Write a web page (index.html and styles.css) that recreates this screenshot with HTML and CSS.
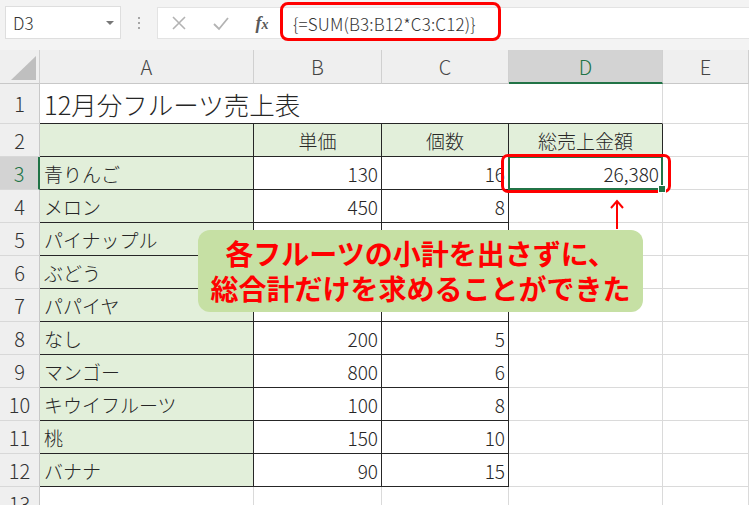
FILE: index.html
```html
<!DOCTYPE html>
<html lang="ja">
<head>
<meta charset="utf-8">
<title>Excel SUM array</title>
<link rel="stylesheet" href="styles.css">
</head>
<body>
<div class="app">
  <div class="toolbar">
    <div class="namebox"><span class="nb-text">D3</span><span class="dd"></span></div>
    <div class="sep"><span></span><span></span><span></span></div>
    <div class="fbar">
      <span class="ic"><svg width="16" height="16" viewBox="0 0 16 16"><path d="M2 2 L14 14 M14 2 L2 14" stroke="#b3b3b3" stroke-width="1.6" fill="none"/></svg></span>
      <span class="ic"><svg width="18" height="16" viewBox="0 0 18 16"><path d="M2 9 L7 14 L16 3" stroke="#b3b3b3" stroke-width="1.8" fill="none"/></svg></span>
      <span class="ic fx"><i>f</i><i class="fx-x">x</i></span>
      <span class="formula">{=SUM(B3:B12*C3:C12)}</span>
    </div>
  </div>

  <div class="sheet">
    <div class="c corner"><span class="tri"></span></div>
    <div class="c ch">A</div><div class="c ch">B</div><div class="c ch">C</div><div class="c ch sel">D</div><div class="c ch">E</div>

    <div class="c rh">1</div><div class="c title">12月分フルーツ売上表</div><div class="c"></div>

    <div class="c rh">2</div><div class="c t g"></div><div class="c t g ctr">単価</div><div class="c t g ctr">個数</div><div class="c t g ctr">総売上金額</div><div class="c"></div>

    <div class="c rh sel">3</div><div class="c t g">青りんご</div><div class="c t n">130</div><div class="c t n">16</div><div class="c t n d3">26,380</div><div class="c"></div>

    <div class="c rh">4</div><div class="c t g">メロン</div><div class="c t n">450</div><div class="c t n">8</div><div class="c"></div><div class="c"></div>

    <div class="c rh">5</div><div class="c t g">パイナップル</div><div class="c t n"></div><div class="c t n"></div><div class="c"></div><div class="c"></div>

    <div class="c rh">6</div><div class="c t g">ぶどう</div><div class="c t n"></div><div class="c t n"></div><div class="c"></div><div class="c"></div>

    <div class="c rh">7</div><div class="c t g">パパイヤ</div><div class="c t n"></div><div class="c t n"></div><div class="c"></div><div class="c"></div>

    <div class="c rh">8</div><div class="c t g">なし</div><div class="c t n">200</div><div class="c t n">5</div><div class="c"></div><div class="c"></div>

    <div class="c rh">9</div><div class="c t g">マンゴー</div><div class="c t n">800</div><div class="c t n">6</div><div class="c"></div><div class="c"></div>

    <div class="c rh">10</div><div class="c t g">キウイフルーツ</div><div class="c t n">100</div><div class="c t n">8</div><div class="c"></div><div class="c"></div>

    <div class="c rh">11</div><div class="c t g">桃</div><div class="c t n">150</div><div class="c t n">10</div><div class="c"></div><div class="c"></div>

    <div class="c rh">12</div><div class="c t g">バナナ</div><div class="c t n">90</div><div class="c t n">15</div><div class="c"></div><div class="c"></div>

    <div class="c rh">13</div><div class="c"></div><div class="c"></div><div class="c"></div><div class="c"></div><div class="c"></div>
  </div>

  <div class="hl-formula"></div>
  <div class="hl-cell"></div>
  <svg class="arrow" width="16" height="32" viewBox="0 0 16 32"><path d="M8 2 L8 30 M2 9 L8 2 L14 9" stroke="#ff0000" stroke-width="2" fill="none"/></svg>
  <div class="callout">
    <p>各フルーツの小計を出さずに、</p>
    <p>総合計だけを求めることができた</p>
  </div>
</div>
</body>
</html>
```

FILE: styles.css
```css
* { box-sizing: border-box; }
html, body { margin: 0; padding: 0; }
body {
  width: 749px;
  height: 505px;
  overflow: hidden;
  background: #ffffff;
  font-family: "Noto Sans CJK JP", "Noto Sans", sans-serif;
  color: #262626;
}
.app {
  position: relative;
  width: 749px;
  height: 505px;
  overflow: hidden;
  background: #f3f3f3;
}

/* toolbar */
.toolbar {
  height: 50px;
  display: flex;
  align-items: flex-start;
  padding: 6px 0 0 5px;
  background: #f3f3f3;
}
.namebox {
  width: 116px;
  height: 33px;
  background: #fff;
  border: 1px solid #dedede;
  display: flex;
  align-items: center;
  justify-content: space-between;
  padding: 0 6px 0 7px;
}
.nb-text { font-size: 17px; color: #333; line-height: 1; font-weight: 300; }
.dd {
  width: 0; height: 0;
  border-left: 4px solid transparent;
  border-right: 4px solid transparent;
  border-top: 4px solid #777;
}
.sep {
  width: 36px;
  height: 33px;
  display: flex;
  flex-direction: column;
  align-items: center;
  justify-content: center;
  gap: 3px;
}
.sep span { width: 2px; height: 2px; background: #a6a6a6; }
.fbar {
  flex: 1;
  height: 32px;
  margin-top: 1px;
  background: #fff;
  border: 1px solid #e3e3e3;
  border-right: 0;
  display: flex;
  align-items: center;
}
.ic {
  width: 42px;
  display: flex;
  justify-content: center;
  align-items: center;
}
.fx {
  width: 40px;
  font-family: "Liberation Serif", serif;
  font-size: 18px;
  color: #595959;
  font-weight: bold;
}
.fx i { font-style: italic; }
.fx-x { font-size: 14px; margin-top: 4px; }
.formula {
  padding-left: 11px;
  font-size: 17px;
  font-weight: 300;
  color: #333;
  letter-spacing: 0.15px;
}

/* sheet */
.sheet {
  display: grid;
  grid-template-columns: 40px 214px 128px 127px 154px 86px;
  grid-template-rows: 34px 40px repeat(12, 33px);
  background: #fff;
}
.c {
  border-right: 1px solid #dadada;
  border-bottom: 1px solid #dadada;
  display: flex;
  align-items: center;
  padding: 0 4px;
  font-size: 19px;
  font-weight: 300;
  white-space: nowrap;
  min-width: 0;
}
.corner {
  background: #efefef;
  border-right: 1px solid #d0d0d0;
  border-bottom: 1px solid #c8c8c8;
  position: relative;
}
.tri {
  position: absolute;
  right: 3px;
  bottom: 3px;
  width: 0; height: 0;
  border-left: 25px solid transparent;
  border-bottom: 24px solid #bfbfbf;
}
.ch {
  background: #efefef;
  justify-content: center;
  font-size: 20px;
  color: #444;
  border-right: 1px solid #d0d0d0;
  border-bottom: 1px solid #c8c8c8;
}
.ch.sel {
  background: #d3d3d3;
  color: #217346;
  border-bottom: 2px solid #217346;
}
.rh {
  background: #efefef;
  justify-content: center;
  font-size: 20px;
  color: #333;
  border-right: 1px solid #c8c8c8;
  border-bottom: 1px solid #d8d8d8;
  padding: 0;
}
.rh.sel {
  background: #d3d3d3;
  color: #217346;
  border-right: 2px solid #217346;
}
.title {
  grid-column: span 4;
  font-size: 25.5px;
  border-right: 1px solid #dadada;
  border-bottom: 1px solid #262626;
  padding-left: 4px;
}
.t {
  border-right: 1px solid #262626;
  border-bottom: 1px solid #262626;
}
.g { background: #e2efda; }
.ctr { justify-content: center; }
.n { justify-content: flex-end; padding-right: 3px; }
.d3 { position: relative; }
.d3::after {
  content: "";
  position: absolute;
  left: -1px; top: -1px; right: -1px; bottom: -1px;
  border: 2px solid #217346;
}
.d3::before {
  content: "";
  position: absolute;
  right: -4px; bottom: -4px;
  width: 6px; height: 6px;
  background: #217346;
  border: 1px solid #fff;
  z-index: 1;
}

/* overlays */
.hl-formula {
  position: absolute;
  left: 280px; top: 2px;
  width: 221px; height: 39px;
  border: 3px solid #ff0000;
  border-radius: 8px;
}
.hl-cell {
  position: absolute;
  left: 501px; top: 154px;
  width: 170px; height: 39px;
  border: 3px solid #ff0000;
  border-radius: 7px;
}
.arrow {
  position: absolute;
  left: 609px; top: 199px;
}
.callout {
  position: absolute;
  left: 198px; top: 230px;
  width: 445px; height: 82px;
  background: #c6e0a4;
  border-radius: 12px;
  display: flex;
  flex-direction: column;
  align-items: center;
  justify-content: center;
  color: #ff0000;
  font-weight: bold;
  font-size: 28px;
  line-height: 35px;
}
.callout p { margin: 0; white-space: nowrap; }
```
